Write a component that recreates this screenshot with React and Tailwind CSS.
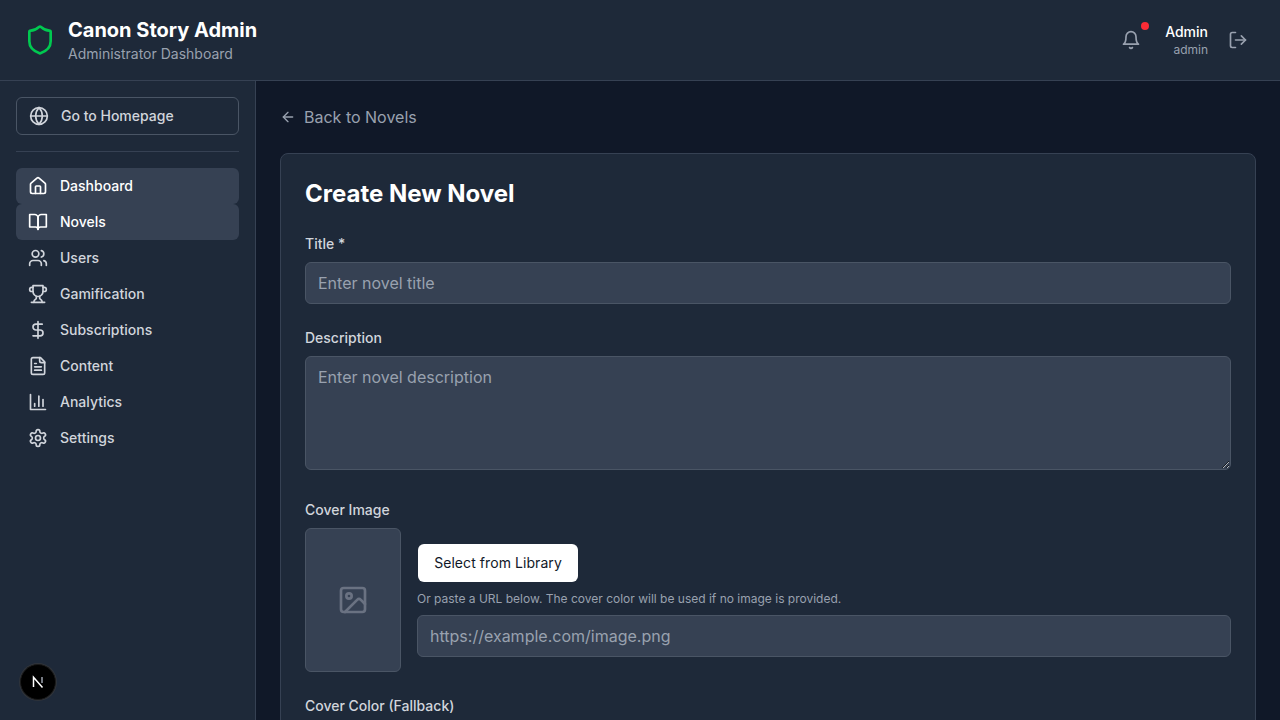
import { ArrowLeft, DollarSign, Globe, Home, Image, Shield, Users } from 'lucide-react';

function Icon({ className, children }) {
  return (
    <svg className={className} viewBox="0 0 24 24" fill="none" stroke="currentColor" strokeWidth="2" strokeLinecap="round" strokeLinejoin="round">
      {children}
    </svg>
  );
}

const BellIcon = ({ className }) => (
  <Icon className={className}>
    <path d="M6 8a6 6 0 0 1 12 0c0 7 3 9 3 9H3s3-2 3-9" />
    <path d="M10.3 21a1.94 1.94 0 0 0 3.4 0" />
  </Icon>
);

const LogOutIcon = ({ className }) => (
  <Icon className={className}>
    <path d="M9 21H5a2 2 0 0 1-2-2V5a2 2 0 0 1 2-2h4" />
    <polyline points="16 17 21 12 16 7" />
    <line x1="21" x2="9" y1="12" y2="12" />
  </Icon>
);

const BookIcon = ({ className }) => (
  <Icon className={className}>
    <path d="M2 3h6a4 4 0 0 1 4 4v14a3 3 0 0 0-3-3H2z" />
    <path d="M22 3h-6a4 4 0 0 0-4 4v14a3 3 0 0 1 3-3h7z" />
  </Icon>
);

const TrophyIcon = ({ className }) => (
  <Icon className={className}>
    <path d="M6 9H4.5a2.5 2.5 0 0 1 0-5H6" />
    <path d="M18 9h1.5a2.5 2.5 0 0 0 0-5H18" />
    <path d="M4 22h16" />
    <path d="M10 14.66V17c0 .55-.47.98-.97 1.21C7.85 18.75 7 20.24 7 22" />
    <path d="M14 14.66V17c0 .55.47.98.97 1.21C16.15 18.75 17 20.24 17 22" />
    <path d="M18 2H6v7a6 6 0 0 0 12 0V2Z" />
  </Icon>
);

const FileIcon = ({ className }) => (
  <Icon className={className}>
    <path d="M15 2H6a2 2 0 0 0-2 2v16a2 2 0 0 0 2 2h12a2 2 0 0 0 2-2V7Z" />
    <path d="M14 2v4a2 2 0 0 0 2 2h4" />
    <path d="M10 9H8" />
    <path d="M16 13H8" />
    <path d="M16 17H8" />
  </Icon>
);

const ChartIcon = ({ className }) => (
  <Icon className={className}>
    <path d="M3 3v18h18" />
    <path d="M18 17V9" />
    <path d="M13 17V5" />
    <path d="M8 17v-3" />
  </Icon>
);

const GearIcon = ({ className }) => (
  <Icon className={className}>
    <path d="M12.22 2h-.44a2 2 0 0 0-2 2v.18a2 2 0 0 1-1 1.73l-.43.25a2 2 0 0 1-2 0l-.15-.08a2 2 0 0 0-2.73.73l-.22.38a2 2 0 0 0 .73 2.73l.15.1a2 2 0 0 1 1 1.72v.51a2 2 0 0 1-1 1.74l-.15.09a2 2 0 0 0-.73 2.73l.22.38a2 2 0 0 0 2.73.73l.15-.08a2 2 0 0 1 2 0l.43.25a2 2 0 0 1 1 1.73V20a2 2 0 0 0 2 2h.44a2 2 0 0 0 2-2v-.18a2 2 0 0 1 1-1.73l.43-.25a2 2 0 0 1 2 0l.15.08a2 2 0 0 0 2.73-.73l.22-.39a2 2 0 0 0-.73-2.73l-.15-.08a2 2 0 0 1-1-1.74v-.5a2 2 0 0 1 1-1.74l.15-.09a2 2 0 0 0 .73-2.73l-.22-.38a2 2 0 0 0-2.73-.73l-.15.08a2 2 0 0 1-2 0l-.43-.25a2 2 0 0 1-1-1.73V4a2 2 0 0 0-2-2z" />
    <circle cx="12" cy="12" r="3" />
  </Icon>
);

const navItems = [
  { label: 'Dashboard', icon: Home, active: true },
  { label: 'Novels', icon: BookIcon, active: true },
  { label: 'Users', icon: Users },
  { label: 'Gamification', icon: TrophyIcon },
  { label: 'Subscriptions', icon: DollarSign },
  { label: 'Content', icon: FileIcon },
  { label: 'Analytics', icon: ChartIcon },
  { label: 'Settings', icon: GearIcon },
];

function Header() {
  return (
    <header className="h-[81px] shrink-0 flex items-center justify-between px-6 bg-[#1e2939] border-b border-[#364153]">
      <div className="flex items-center gap-3">
        <Shield className="w-8 h-8 text-[#00c950]" />
        <div>
          <h1 className="text-xl leading-7 font-bold text-white">Canon Story Admin</h1>
          <p className="text-sm leading-5 text-[#99a1af]">Administrator Dashboard</p>
        </div>
      </div>
      <div className="flex items-center gap-3">
        <div className="relative p-2 mr-1 text-[#99a1af]">
          <BellIcon className="w-5 h-5" />
          <span className="absolute top-0 right-0 w-2 h-2 rounded-full bg-[#fb2c36]" />
        </div>
        <div className="text-right">
          <p className="text-sm leading-5 font-medium text-white">Admin</p>
          <p className="text-xs leading-4 text-[#99a1af]">admin</p>
        </div>
        <div className="p-2 text-[#99a1af]">
          <LogOutIcon className="w-5 h-5" />
        </div>
      </div>
    </header>
  );
}

function Sidebar() {
  return (
    <aside className="relative w-64 shrink-0 bg-[#1e2939] border-r border-[#364153] p-4">
      <div className="h-[38px] flex items-center gap-3 px-3 rounded-md border border-[#4a5565] text-sm font-medium text-[#d1d5dc]">
        <Globe className="w-5 h-5" />
        Go to Homepage
      </div>
      <div className="h-px bg-[#364153] mt-4 mb-4" />
      <nav>
        {navItems.map((item) => (
          <div
            key={item.label}
            className={`h-9 flex items-center gap-3 px-3 rounded-md text-sm font-medium ${item.active ? 'bg-[#364153] text-white' : 'text-[#d1d5dc]'}`}
          >
            <item.icon className="w-5 h-5" />
            {item.label}
          </div>
        ))}
      </nav>
      <div className="absolute left-[20px] bottom-[20px] w-9 h-9 rounded-full bg-black border border-[#1a1a1a] shadow-[0_0_0_1px_#2f333a] flex items-center justify-center">
        <svg width="14" height="14" viewBox="0 0 14 14" fill="none">
          <path d="M2.5 12V2.2L11.5 12.6" stroke="white" strokeWidth="1.5" />
          <path d="M11 2v6" stroke="#9ca3af" strokeWidth="1.5" />
        </svg>
      </div>
    </aside>
  );
}

function Field({ label, children }) {
  return (
    <div className="mb-6">
      <label className="block mb-2 text-sm leading-5 font-medium text-[#d1d5dc]">{label}</label>
      {children}
    </div>
  );
}

const inputClass = 'w-full rounded-md border border-[#4a5565] bg-[#364153] px-3 py-2 text-base text-white placeholder:text-[#99a1af] outline-none';

function NovelForm() {
  return (
    <div className="rounded-lg border border-[#364153] bg-[#1e2939] p-6">
      <h2 className="mb-6 text-2xl leading-8 font-bold text-white">Create New Novel</h2>
      <Field label="Title *">
        <input className={`${inputClass} h-[42px]`} placeholder="Enter novel title" />
      </Field>
      <Field label="Description">
        <textarea className={`${inputClass} h-[114px]`} rows={4} placeholder="Enter novel description" />
      </Field>
      <Field label="Cover Image">
        <div className="flex items-center gap-4">
          <div className="w-24 h-36 shrink-0 rounded-md border border-[#4a5565] bg-[#364153] flex items-center justify-center text-[#6a7282]">
            <Image className="w-8 h-8" />
          </div>
          <div className="flex-1 min-w-0">
            <button type="button" className="w-40 h-[38px] ml-px rounded-md bg-white text-sm font-normal tracking-[0.07px] text-[#101828]">
              Select from Library
            </button>
            <p className="mt-[9px] mb-2 text-xs leading-4 text-[#99a1af]">Or paste a URL below. The cover color will be used if no image is provided.</p>
            <input className={`${inputClass} h-[42px]`} placeholder="https://example.com/image.png" />
          </div>
        </div>
      </Field>
      <Field label="Cover Color (Fallback)">
        <input className={`${inputClass} h-[42px]`} />
      </Field>
    </div>
  );
}

export default function App() {
  return (
    <div className="h-screen flex flex-col overflow-hidden bg-[#101828] font-['Inter',sans-serif]">
      <Header />
      <div className="flex-1 min-h-0 flex">
        <Sidebar />
        <main className="flex-1 min-w-0 overflow-hidden p-6">
          <div className="h-6 mb-6 flex items-center gap-2 text-base text-[#99a1af]">
            <ArrowLeft className="w-4 h-4" />
            Back to Novels
          </div>
          <NovelForm />
        </main>
      </div>
    </div>
  );
}
